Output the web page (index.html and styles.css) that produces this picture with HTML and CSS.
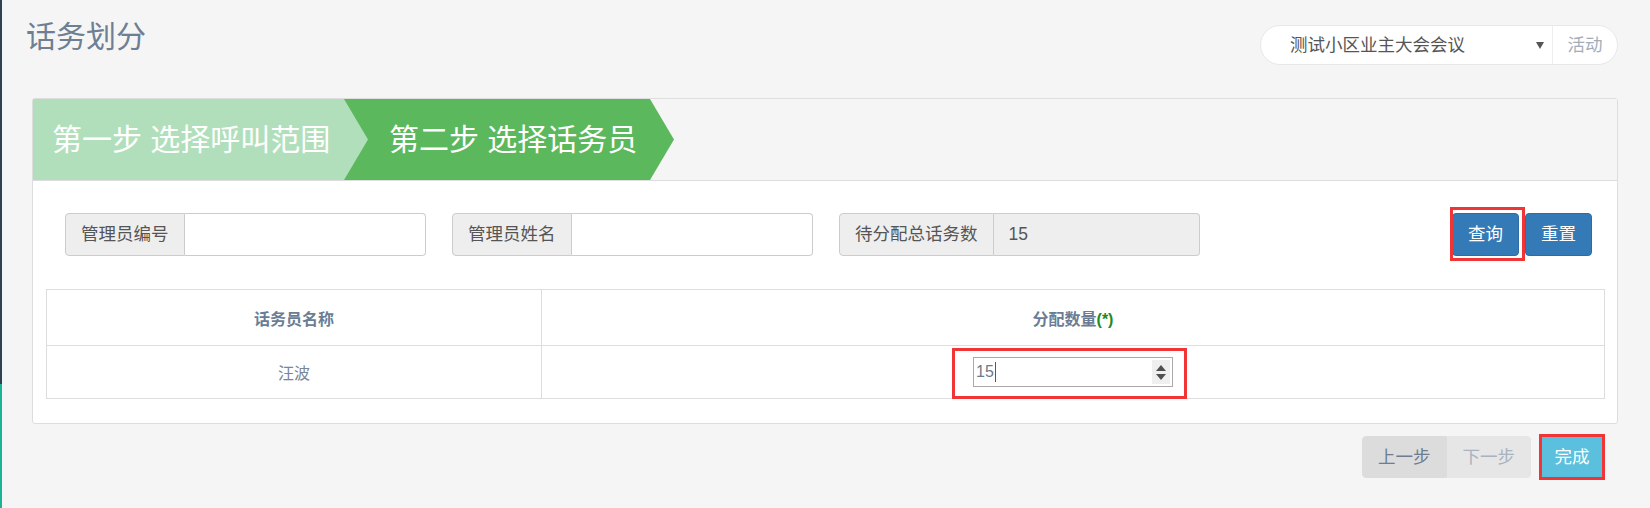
FILE: index.html
```html
<!DOCTYPE html>
<html lang="zh-CN">
<head>
<meta charset="utf-8">
<title>话务划分</title>
<link rel="stylesheet" href="styles.css">
</head>
<body>
<div class="layout">
  <div class="sidebar-edge"></div>
  <main class="content">
    <div class="top">
      <h2 class="title">话务划分</h2>
      <div class="activity-select">
        <div class="select-box">
          <span class="select-text">测试小区业主大会会议</span>
          <span class="select-arrow"></span>
        </div>
        <span class="select-addon">活动</span>
      </div>
    </div>

    <div class="panel">
      <div class="panel-heading">
        <div class="step step-done">第一步 选择呼叫范围</div>
        <div class="step step-active">第二步 选择话务员</div>
      </div>
      <div class="panel-body">
        <div class="filters">
          <div class="input-group">
            <span class="addon">管理员编号</span>
            <span class="field"></span>
          </div>
          <div class="input-group">
            <span class="addon">管理员姓名</span>
            <span class="field"></span>
          </div>
          <div class="input-group">
            <span class="addon">待分配总话务数</span>
            <span class="field field-disabled">15</span>
          </div>
          <div class="actions">
            <span class="marked marked-query"><button class="btn btn-primary">查询</button></span>
            <button class="btn btn-primary">重置</button>
          </div>
        </div>

        <table class="grid">
          <thead>
            <tr>
              <th class="col-name">话务员名称</th>
              <th>分配数量<span class="req">(*)</span></th>
            </tr>
          </thead>
          <tbody>
            <tr>
              <td class="col-name">汪波</td>
              <td>
                <span class="marked marked-number">
                  <span class="num-input">
                    <span class="num-value">15</span><span class="caret"></span>
                    <span class="spinner"><span class="spin-up"></span><span class="spin-down"></span></span>
                  </span>
                </span>
              </td>
            </tr>
          </tbody>
        </table>
      </div>
    </div>

    <div class="footer-actions">
      <div class="btn-group">
        <button class="btn btn-default">上一步</button>
        <button class="btn btn-default btn-disabled">下一步</button>
      </div>
      <span class="marked marked-finish"><button class="btn btn-info">完成</button></span>
    </div>
  </main>
</div>
</body>
</html>
```

FILE: styles.css
```css
* { box-sizing: border-box; }

html, body {
  margin: 0;
  padding: 0;
}

body {
  background: #f5f5f5;
  font-family: "Liberation Sans", "Noto Sans CJK SC", sans-serif;
  color: #555;
}

.layout {
  display: flex;
  min-height: 508px;
}

.sidebar-edge {
  width: 2px;
  flex: none;
  background: linear-gradient(to bottom, #2f4050 0, #2f4050 384px, #1ab394 384px, #1ab394 100%);
}

.content {
  flex: 1;
  padding: 20px 32px 0 30px;
}

/* top bar */
.top {
  display: flex;
  justify-content: space-between;
  align-items: flex-start;
}

.title {
  margin: 0 0 0 -6px;
  font-size: 30px;
  line-height: 33px;
  font-weight: normal;
  color: #6e7e93;
}

.activity-select {
  display: flex;
  width: 358px;
  height: 40px;
  margin-top: 5px;
  border: 1px solid #e8e8e8;
  border-radius: 20px;
  background: #fff;
}

.select-box {
  flex: 1;
  display: flex;
  align-items: center;
  padding-left: 29px;
}

.select-text {
  font-size: 17.5px;
  line-height: 38px;
  color: #555;
}

.select-arrow {
  margin-left: auto;
  margin-right: 8px;
  width: 0;
  height: 0;
  border-left: 4px solid transparent;
  border-right: 4px solid transparent;
  border-top: 7px solid #555;
}

.select-addon {
  width: 65px;
  border-left: 1px solid #eee;
  text-align: center;
  font-size: 17.5px;
  line-height: 38px;
  color: #a3adba;
}

/* panel */
.panel {
  margin-top: 33px;
  background: #fff;
  border: 1px solid #ddd;
  border-radius: 3px;
}

.panel-heading {
  display: flex;
  height: 82px;
  background: #f5f5f5;
  border-bottom: 1px solid #ddd;
}

.step {
  height: 81px;
  font-size: 30px;
  line-height: 81px;
  color: #fff;
  white-space: nowrap;
  clip-path: polygon(0 0, calc(100% - 24px) 0, 100% 50%, calc(100% - 24px) 100%, 0 100%);
}

.step-done {
  position: relative;
  z-index: 1;
  width: 335px;
  padding-left: 19px;
  background: #b1dfbb;
}

.step-active {
  width: 330px;
  margin-left: -24px;
  padding-left: 45px;
  background: #5cb85c;
}

.panel-body {
  padding: 32px 12px 24px 13px;
}

/* filters */
.filters {
  display: flex;
  align-items: center;
  gap: 26px;
  padding: 0 13px 0 19px;
  margin-bottom: 33px;
}

.input-group {
  display: flex;
  width: 361px;
  height: 43px;
}

.addon {
  padding: 0 15px;
  background: #eee;
  border: 1px solid #ccc;
  border-radius: 4px 0 0 4px;
  font-size: 17.5px;
  line-height: 41px;
  color: #555;
  white-space: nowrap;
}

.field {
  flex: 1;
  border: 1px solid #ccc;
  border-left: 0;
  border-radius: 0 4px 4px 0;
  background: #fff;
  padding-left: 15px;
  font-size: 17.5px;
  line-height: 41px;
  color: #555;
}

.field-disabled {
  background: #eee;
}

.actions {
  margin-left: auto;
  display: flex;
  gap: 6px;
}

/* buttons */
.btn {
  height: 43px;
  padding: 0 15px;
  font-family: inherit;
  font-size: 17.5px;
  line-height: 41px;
  border: 1px solid transparent;
  border-radius: 4px;
  cursor: pointer;
}

.btn-primary {
  background: #337ab7;
  border-color: #2e6da4;
  color: #fff;
}

.marked {
  position: relative;
  display: inline-flex;
}

.marked::after {
  content: "";
  position: absolute;
  border: 3px solid #ef3535;
  pointer-events: none;
}

.marked-query::after {
  left: -2px;
  right: -6px;
  top: -6px;
  bottom: -5px;
}

/* table */
.grid {
  width: 100%;
  border-collapse: collapse;
}

.grid th,
.grid td {
  border: 1px solid #ddd;
  text-align: center;
  vertical-align: middle;
  padding: 0;
}

.grid th {
  height: 56px;
  font-size: 16px;
  font-weight: bold;
  color: #6b7d95;
}

.grid td {
  height: 53px;
  font-size: 16px;
  color: #7a8596;
}

.grid .col-name {
  width: 495px;
}

.req {
  color: #1e8a1e;
}

.num-input {
  display: inline-flex;
  align-items: center;
  width: 200px;
  height: 30px;
  border: 1px solid #a9a9a9;
  background: #fff;
  padding-left: 2px;
  padding-right: 2px;
}

.num-value {
  font-size: 16px;
  line-height: 28px;
  color: #6b7a8c;
}

.caret {
  width: 1px;
  height: 20px;
  margin-left: 1px;
  background: #4a5a70;
}

.spinner {
  margin-left: auto;
  width: 18px;
  height: 24px;
  background: #efefef;
  display: flex;
  flex-direction: column;
  align-items: center;
  justify-content: center;
  gap: 3px;
}

.spin-up {
  width: 0;
  height: 0;
  border-left: 5px solid transparent;
  border-right: 5px solid transparent;
  border-bottom: 6px solid #505050;
}

.spin-down {
  width: 0;
  height: 0;
  border-left: 5px solid transparent;
  border-right: 5px solid transparent;
  border-top: 6px solid #505050;
}

.marked-number::after {
  left: -21px;
  right: -14px;
  top: -9px;
  bottom: -12px;
}

/* footer */
.footer-actions {
  display: flex;
  justify-content: flex-end;
  align-items: center;
  gap: 11px;
  margin-top: 12px;
  padding-right: 16px;
}

.btn-group {
  display: flex;
}

.btn-group .btn {
  height: 42px;
  padding: 0 15px;
  line-height: 40px;
  border-radius: 0;
}

.btn-group .btn:first-child {
  border-radius: 4px 0 0 4px;
}

.btn-group .btn:last-child {
  border-radius: 0 4px 4px 0;
}

.btn-default {
  background: #dcdcdc;
  border-color: #dcdcdc;
  color: #6d7d92;
}

.btn-disabled {
  background: #e6e6e6;
  border-color: #e6e6e6;
  color: #a9b2bf;
}

.btn-info {
  height: 41px;
  padding: 0 12.5px;
  line-height: 41px;
  background: #5bc0de;
  border: 0;
  border-radius: 0;
  color: #fff;
}

.marked-finish::after {
  left: -3px;
  right: -3px;
  top: -3px;
  bottom: -2px;
}
```
